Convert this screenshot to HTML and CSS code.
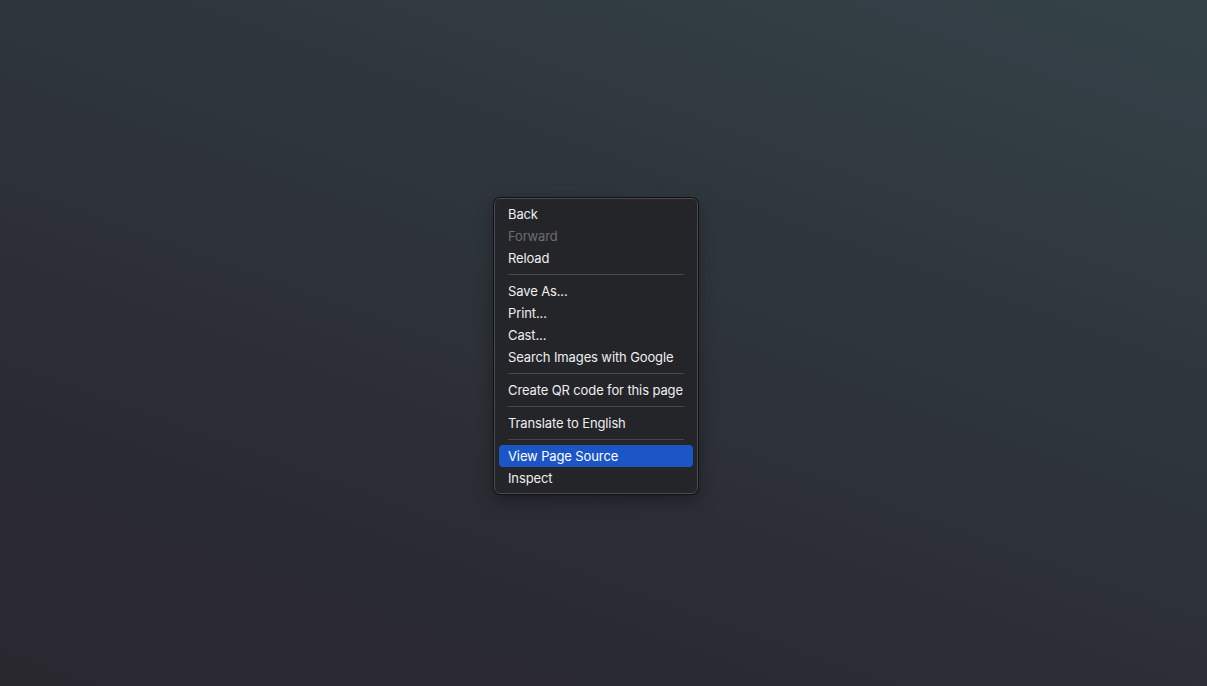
FILE: index.html
```html
<!DOCTYPE html>
<html>
<head>
<meta charset="utf-8">
<link rel="stylesheet" href="styles.css">
</head>
<body>
<div class="desktop">
  <div class="menu">
    <div class="item">Back</div>
    <div class="item disabled">Forward</div>
    <div class="item">Reload</div>
    <div class="sep"></div>
    <div class="item">Save As...</div>
    <div class="item">Print...</div>
    <div class="item">Cast...</div>
    <div class="item">Search Images with Google</div>
    <div class="sep"></div>
    <div class="item">Create QR code for this page</div>
    <div class="sep"></div>
    <div class="item">Translate to English</div>
    <div class="sep"></div>
    <div class="item active">View Page Source</div>
    <div class="item">Inspect</div>
  </div>
</div>
</body>
</html>
```
FILE: styles.css
```css
html, body {
  margin: 0;
  padding: 0;
  height: 100%;
}
.desktop {
  position: relative;
  width: 1207px;
  height: 686px;
  overflow: hidden;
  background: linear-gradient(200deg, #344248 0%, #2e353c 40%, #2a2a33 75%, #29282f 100%);
  font-family: Inter, "Noto Sans", "Liberation Sans", sans-serif;
}
.menu {
  position: absolute;
  left: 494px;
  top: 198px;
  width: 204px;
  box-sizing: border-box;
  padding: 4px 4px;
  background: #242529;
  border: 1px solid #4b4b50;
  border-radius: 6px;
  box-shadow: 0 0 0 1px #111114, 0 6px 18px rgba(0,0,0,0.35);
  display: flex;
  flex-direction: column;
}
.item {
  height: 22px;
  line-height: 22px;
  padding: 0 9px;
  font-size: 13px;
  color: #eeeeef;
  border-radius: 4px;
  white-space: nowrap;
  letter-spacing: -0.12px;
}
.item.disabled {
  color: #6c6d71;
}
.item.active {
  background: #1c55c5;
  color: #ffffff;
}
.sep {
  height: 1px;
  margin: 5px 9px;
  background: #47484c;
}
```
